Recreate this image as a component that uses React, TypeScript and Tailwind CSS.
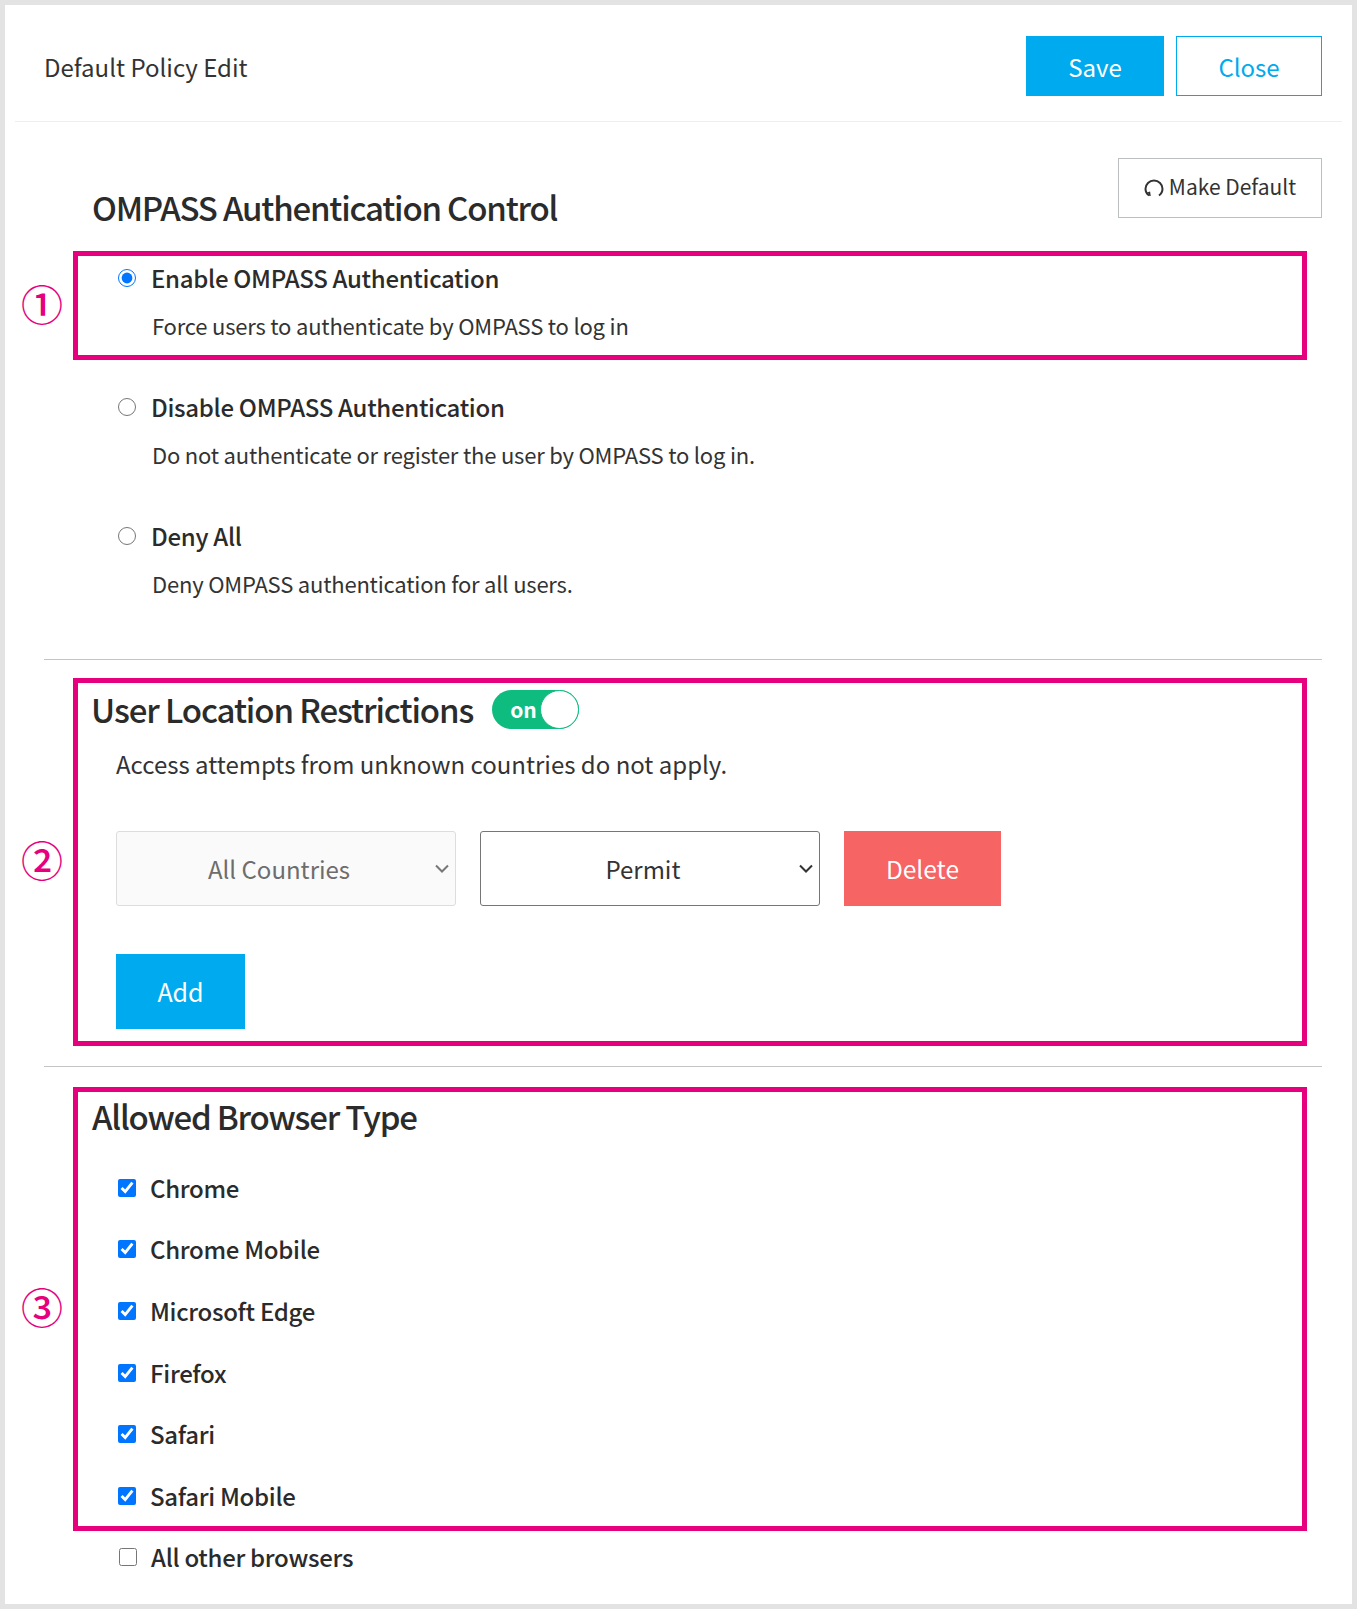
import { ReactNode } from "react";

const browsers = ["Chrome", "Chrome Mobile", "Microsoft Edge", "Firefox", "Safari", "Safari Mobile"];

const font = { fontFamily: '"Noto Sans CJK KR", "Noto Sans", sans-serif' };

const Marked = ({ mark, className, children }: { mark: string; className: string; children: ReactNode }) => (
  <div className={`relative ml-[29px] mr-[15px] border-[5px] border-[#e6007e] ${className}`}>
    <span className="absolute left-[-57px] top-1/2 -translate-y-[56%] text-[42px] font-medium leading-none text-[#e6007e]">{mark}</span>
    {children}
  </div>
);

const Option = ({ label, desc, checked }: { label: string; desc: string; checked?: boolean }) => (
  <div>
    <label className="flex h-9 items-center pl-[45px]">
      <input type="radio" name="auth" defaultChecked={checked} className="m-0 h-[18px] w-[18px]" />
      <span className="ml-[15px] text-[24px] font-medium tracking-[-0.3px] text-[#2b2b2b]">{label}</span>
    </label>
    <p className="mt-[11px] pl-[79px] text-[22px] leading-9 tracking-[-0.2px] text-[#333]">{desc}</p>
  </div>
);

const Browser = ({ name, checked }: { name: string; checked?: boolean }) => (
  <label className="flex h-9 items-center">
    <input type="checkbox" defaultChecked={checked} className="m-0 h-[18px] w-[18px]" />
    <span className="ml-[14px] text-[24px] font-medium tracking-[-0.3px] text-[#2b2b2b]">{name}</span>
  </label>
);

const Chevron = ({ color, right }: { color: string; right: string }) => (
  <svg
    width="14"
    height="9"
    viewBox="0 0 14 9"
    fill="none"
    stroke={color}
    strokeWidth="2"
    className={`pointer-events-none absolute top-[33px] ${right}`}
  >
    <path d="M1 1.500 7 7.500 13 1.500" />
  </svg>
);

export default function App() {
  return (
    <div style={font} className="h-[1609px] bg-[#e3e3e3] p-[5px]">
      <div className="h-[1599px] bg-white">
        <header className="mx-[10px] flex h-[117px] items-center justify-between border-b border-[#eeeeee] pl-[29px] pr-5 pt-[6px]">
          <h1 className="mt-[1px] text-[24px] font-normal text-[#333]">Default Policy Edit</h1>
          <div className="flex gap-3">
            <button className="h-[60px] w-[138px] bg-[#00aaee] pt-[1px] text-[24px] text-white">Save</button>
            <button className="h-[60px] w-[146px] border border-[#00aaee] pt-[1px] text-[24px] text-[#00aaee]">Close</button>
          </div>
        </header>

        <main className="pl-[39px] pr-[30px]">
          <div className="flex items-start justify-between pt-9">
            <h2 className="ml-[48px] mt-[26px] text-[33px] font-medium leading-[46px] tracking-[-1.2px] text-[#2b2b2b]">OMPASS Authentication Control</h2>
            <button className="flex h-[60px] w-[204px] items-center justify-center gap-[5px] border border-[#bbbfbf] pb-[2px] text-[21px] text-[#333]">
              <svg width="20" height="20" viewBox="0 0 20 20" fill="none" stroke="#333" strokeWidth="2" className="mt-[2px]">
                <path d="M5 17.500C2.800 16 1.500 13.600 1.500 10.800 1.500 6.200 5.300 2.500 10 2.500s8.500 3.700 8.500 8.300c0 2.800-1.300 5.200-3.500 6.700" />
                <path d="M2.500 15.500 5.500 14.500 6 18" strokeWidth="1.500" />
              </svg>
              Make Default
            </button>
          </div>

          <Marked mark="①" className="mt-[21px] h-[109px] pt-[4px]">
            <div className="-ml-[5px]">
              <Option label="Enable OMPASS Authentication" desc="Force users to authenticate by OMPASS to log in" checked />
            </div>
          </Marked>

          <div className="ml-[29px] mt-[29px] flex flex-col gap-[46px]">
            <Option label="Disable OMPASS Authentication" desc="Do not authenticate or register the user by OMPASS to log in." />
            <Option label="Deny All" desc="Deny OMPASS authentication for all users." />
          </div>

          <hr className="mt-[58px] border-[#c4c4c4]" />

          <Marked mark="②" className="mt-[18px] h-[368px]">
            <div className="flex h-[52px] items-center pl-[13px]">
              <h2 className="text-[33px] font-medium leading-[46px] tracking-[-1.1px] text-[#2b2b2b]">User Location Restrictions</h2>
              <div className="relative ml-[19px] flex h-[39px] w-[87px] items-center rounded-full bg-[#0ebc80] pl-[18px]">
                <span className="text-[21px] font-bold leading-none text-white">on</span>
                <span className="absolute right-0 top-0 h-[39px] w-[39px] rounded-full border border-[#0ebc80] bg-white" />
              </div>
            </div>
            <p className="mt-[11px] pl-[38px] text-[24px] leading-9 text-[#333]">Access attempts from unknown countries do not apply.</p>
            <div className="mt-[49px] flex gap-6 pl-[38px]">
              <div className="relative">
                <select disabled className="h-[75px] w-[340px] appearance-none rounded-[3px] border border-[#dddddd] bg-[#fafafa] pr-[14px] text-center text-[24px] text-[#6d6d6d] opacity-100">
                  <option>All Countries</option>
                </select>
                <Chevron color="#777777" right="right-[7px]" />
              </div>
              <div className="relative">
                <select className="h-[75px] w-[340px] appearance-none rounded-[3px] border border-[#767676] bg-white pr-[14px] text-center text-[24px] text-[#333]">
                  <option>Permit</option>
                </select>
                <Chevron color="#333333" right="right-[7px]" />
              </div>
              <button className="h-[75px] w-[157px] bg-[#f66464] pt-[1px] text-[24.500px] text-white">Delete</button>
            </div>
            <button className="ml-[38px] mt-[48px] block h-[75px] w-[129px] bg-[#00aaee] pt-[1px] text-[25px] text-white">Add</button>
          </Marked>

          <hr className="mt-5 border-[#c4c4c4]" />

          <Marked mark="③" className="mt-5 h-[444px] pl-[40px]">
            <h2 className="-ml-[26px] mt-[1px] text-[33px] font-medium leading-[46px] tracking-[-1.2px] text-[#2b2b2b]">Allowed Browser Type</h2>
            <div className="mt-[30.500px] flex flex-col gap-[25.700px]">
              {browsers.map((b) => (
                <Browser key={b} name={b} checked />
              ))}
            </div>
          </Marked>

          <div className="ml-[75px] mt-[8px]">
            <Browser name="All other browsers" />
          </div>
        </main>
      </div>
    </div>
  );
}
